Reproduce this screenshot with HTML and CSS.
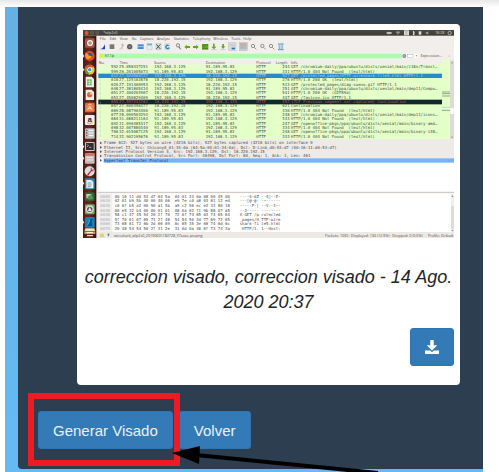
FILE: index.html
```html
<!DOCTYPE html>
<html lang="es">
<head>
<meta charset="utf-8">
<meta name="viewport" content="width=device-width, initial-scale=1">
<title>Generar Visado</title>
<link rel="stylesheet" href="styles.css">
</head>
<body>
<div class="topbar"></div>
<main class="page">
  <section class="panel">
    <figure class="card">
      <svg class="capture" viewBox="0 0 1113 625" role="img" aria-label="Captura de Wireshark">
        <defs>
          <linearGradient id="dock" x1="0" x2="1" y1="0" y2="0"><stop offset="0" stop-color="#4e1c14"/><stop offset=".5" stop-color="#672c20"/><stop offset="1" stop-color="#35130e"/></linearGradient>
          <linearGradient id="sky" x1="0" x2="0" y1="0" y2="1"><stop offset="0" stop-color="#4b4a44"/><stop offset="1" stop-color="#3b3a36"/></linearGradient>
        </defs>
        <rect width="1113" height="625" fill="#f1eeeb"/>
        <rect width="1113" height="17" fill="url(#sky)"/>
        <circle cx="11" cy="9" r="6" fill="#e9572d"/>
        <circle cx="27" cy="9" r="5" fill="#55534c" stroke="#77756b"/><circle cx="43" cy="9" r="5" fill="#55534c" stroke="#77756b"/>
        <text class="ui light" x="61" y="13">*wlp2s0</text>
        <g fill="#dfdbd2">
          <path d="M911 7h6v-3l4 5-4 5v-3h-6zM926 7h-6v4h6z"/><path d="M938 6q7-5 14 0l-7 8z" opacity=".5"/>
          <rect x="963" y="1" width="15" height="15"/><path d="M990 3h2l4 4-3 2 3 3-4 4h-2z"/><rect x="1007" y="4" width="8" height="10"/>
          <path d="M1028 7h4l4-3v10l-4-3h-4z" opacity=".6"/><circle cx="1100" cy="9" r="5" fill="none" stroke="#dfdbd2" stroke-width="2"/>
        </g>
        <path d="M967 5h7M967 9h5M967 12h7" stroke="#555" stroke-width="1"/>
        <text class="ui light" x="1056" y="13">18:28</text>

        <g class="ui">
          <text x="51" y="31">File</text><text x="80" y="31">Edit</text><text x="110" y="31">View</text><text x="146" y="31">Go</text><text x="171" y="31">Capture</text><text x="222" y="31">Analyze</text><text x="272" y="31">Statistics</text><text x="329" y="31">Telephony</text><text x="391" y="31">Wireless</text><text x="445" y="31">Tools</text><text x="481" y="31">Help</text>
        </g>
        <path d="M51 58q9-2 15-15v15z" fill="#193fc4"/>
        <rect x="80" y="43" width="14" height="14" fill="#777"/>
        <path d="M106 58q7-2 13-14v14z" fill="#ccc"/><path d="M114 45l6-3v9" fill="none" stroke="#999" stroke-width="2"/>
        <circle cx="140" cy="50" r="8" fill="#606060"/><circle cx="140" cy="50" r="3" fill="#909090"/>
        <rect x="164" y="43" width="18" height="14" fill="#4288db"/><path d="M164 50h18" stroke="#dceafa" stroke-width="2"/>
        <path d="M192 41h15v18h-15z" fill="#e5eef0" stroke="#a8b6b8"/><path d="M192 41h15v5h-15z" fill="#62b3df"/>
        <path d="M219 41h15v18h-15z" fill="#dfe6e6" stroke="#999"/><path d="M220 43l12 14M232 43l-12 14" stroke="#38505c" stroke-width="3"/>
        <path d="M246 41h14v18h-14z" fill="#e7edf0" stroke="#aaa"/><path d="M257 47a5 5 0 1 0 1 6" fill="none" stroke="#287bb5" stroke-width="4"/>
        <g fill="none" stroke="#555" stroke-width="2"><circle cx="285" cy="46" r="5"/><path d="M288 51l5 7" stroke-width="3"/></g>
        <g fill="#5dac17"><path d="M304 51l8-7v4h9v6h-9v4zM347 51l-8-7v4h-9v6h9v4z"/><path d="M390 41h5v9h5l-7 8-8-8h5zM418 42h5v7h4l-7 8-6-8h4z"/><path d="M357 42h19v17h-19z"/></g>
        <path d="M358 45h17M358 50h6M358 56h17" stroke="#333" stroke-width="1"/><path d="M384 59h17M412 59h15" stroke="#888"/>
        <rect x="437" y="38" width="22" height="24" fill="#d7dbdd" stroke="#aeb2b5"/><path d="M440 43h16M440 47h16" stroke="#aaa"/><path d="M446 53h10v5h-10z" fill="#386dac"/>
        <rect x="469" y="38" width="24" height="24" fill="#ccc" stroke="#aaa"/><path d="M471 42h20" stroke="#d76868" stroke-width="2"/><path d="M471 48h20" stroke="#71a974" stroke-width="2"/><path d="M471 54h20" stroke="#7399bd" stroke-width="2"/>
        <g fill="#eee" stroke="#666" stroke-width="2"><circle cx="510" cy="48" r="5"/><path d="M514 52l6 6"/><circle cx="538" cy="48" r="5"/><path d="M542 52l6 6"/><circle cx="564" cy="48" r="5"/><path d="M568 52l6 6"/></g>
        <path d="M585 41h17v19h-17z" fill="#dbe7f4"/><path d="M585 42h17M585 59h17M587 48h5M595 48h5M587 54h5M595 54h5" stroke="#2d6199" stroke-width="2"/>

        <rect x="49" y="71" width="908" height="14" fill="#adffad"/>
        <path d="M52 72h7v12l-3-3-4 3z" fill="#ffe400"/>
        <text class="mono" x="65" y="82">http</text>
        <rect x="957" y="71" width="50" height="14" fill="#fafafa"/><circle cx="964" cy="78" r="6" fill="#888"/><path d="M961 75l6 6M967 75l-6 6" stroke="#eee"/><rect x="974" y="73" width="16" height="10" fill="#fff" stroke="#888"/><path d="M998 76l5 0-3 4z" fill="#777"/>
        <text class="ui" x="1013" y="82">Expression…</text><text class="ui" x="1095" y="82">+</text>

        <g class="ui"><text x="47" y="102">No.</text><text x="110" y="102">Time</text><text x="213" y="102">Source</text><text x="368" y="102">Destination</text><text x="520" y="102">Protocol</text><text x="578" y="102">Length</text><text x="623" y="102">Info</text></g>
        <rect x="46" y="104" width="1031" height="224" fill="#e4ffc7"/>
        <rect x="46" y="131" width="1031" height="13" fill="#288ac9"/>
        <rect x="46" y="209" width="1031" height="14" fill="#12272e"/>
        <g class="mono">
          <text y="115"><tspan x="84">592</tspan><tspan x="108">25.058437251</tspan><tspan x="214">192.168.3.129</tspan><tspan x="368">91.189.95.83</tspan><tspan x="520">HTTP</tspan><tspan x="598">244</tspan><tspan x="624">GET /chromium-daily/ppa/ubuntu/dists/xenial/main/i18n/Transl…</tspan></text>
          <text y="128"><tspan x="84">599</tspan><tspan x="108">26.201005073</tspan><tspan x="214">91.189.95.83</tspan><tspan x="368">192.168.3.129</tspan><tspan x="520">HTTP</tspan><tspan x="598">331</tspan><tspan x="624">HTTP/1.0 404 Not Found  (text/html)</tspan></text>
          <text y="141" class="selected"><tspan x="84">612</tspan><tspan x="108">27.020500727</tspan><tspan x="214">192.168.3.129</tspan><tspan x="368">18.220.192.15</tspan><tspan x="520">HTTP</tspan><tspan x="598">527</tspan><tspan x="624">GET /protected_pages/HTTP-wireshark-file5.html HTTP/1.1</tspan></text>
          <text y="154"><tspan x="84">618</tspan><tspan x="108">27.125102878</tspan><tspan x="214">18.220.192.15</tspan><tspan x="368">192.168.3.129</tspan><tspan x="520">HTTP</tspan><tspan x="598">276</tspan><tspan x="624">HTTP/1.0 200 OK  (text/html)</tspan></text>
          <text y="167"><tspan x="84">620</tspan><tspan x="108">27.191400953</tspan><tspan x="214">192.168.3.129</tspan><tspan x="368">18.220.192.15</tspan><tspan x="520">HTTP</tspan><tspan x="598">513</tspan><tspan x="624">GET /protected_pages/diag-sueno.gif HTTP/1.1</tspan></text>
          <text y="180"><tspan x="84">648</tspan><tspan x="108">27.381805434</tspan><tspan x="214">192.168.3.129</tspan><tspan x="368">91.189.95.83</tspan><tspan x="520">HTTP</tspan><tspan x="598">251</tspan><tspan x="624">GET /chromium-daily/ppa/ubuntu/dists/xenial/main/dep11/Compo…</tspan></text>
          <text y="193"><tspan x="84">651</tspan><tspan x="108">27.400203967</tspan><tspan x="214">18.220.192.15</tspan><tspan x="368">192.168.3.129</tspan><tspan x="520">HTTP</tspan><tspan x="598">541</tspan><tspan x="624">HTTP/1.0 200 OK  (GIF89a)</tspan></text>
          <text y="206"><tspan x="84">653</tspan><tspan x="108">27.450829409</tspan><tspan x="214">192.168.3.129</tspan><tspan x="368">18.220.192.15</tspan><tspan x="520">HTTP</tspan><tspan x="598">447</tspan><tspan x="624">GET /favicon.ico HTTP/1.1</tspan></text>
          <text y="219" class="warning"><tspan x="84">655</tspan><tspan x="108">27.597241761</tspan><tspan x="214">18.220.192.15</tspan><tspan x="368">192.168.3.129</tspan><tspan x="520">HTTP</tspan><tspan x="598">257</tspan><tspan x="624">[TCP Previous segment not captured] Continuation</tspan></text>
          <text y="232"><tspan x="84">657</tspan><tspan x="108">27.600356377</tspan><tspan x="214">18.220.192.15</tspan><tspan x="368">192.168.3.129</tspan><tspan x="520">HTTP</tspan><tspan x="598">621</tspan><tspan x="624">Continuation</tspan></text>
          <text y="245"><tspan x="84">669</tspan><tspan x="108">28.087904400</tspan><tspan x="214">91.189.95.83</tspan><tspan x="368">192.168.3.129</tspan><tspan x="520">HTTP</tspan><tspan x="598">330</tspan><tspan x="624">HTTP/1.0 404 Not Found  (text/html)</tspan></text>
          <text y="258"><tspan x="84">677</tspan><tspan x="108">28.090503293</tspan><tspan x="214">192.168.3.129</tspan><tspan x="368">91.189.95.83</tspan><tspan x="520">HTTP</tspan><tspan x="598">248</tspan><tspan x="624">GET /chromium-daily/ppa/ubuntu/dists/xenial/main/dep11/icons…</tspan></text>
          <text y="271"><tspan x="84">684</tspan><tspan x="108">31.088211164</tspan><tspan x="214">91.189.95.83</tspan><tspan x="368">192.168.3.129</tspan><tspan x="520">HTTP</tspan><tspan x="598">333</tspan><tspan x="624">HTTP/1.0 404 Not Found  (text/html)</tspan></text>
          <text y="284"><tspan x="84">692</tspan><tspan x="108">31.090485317</tspan><tspan x="214">192.168.3.129</tspan><tspan x="368">91.189.95.83</tspan><tspan x="520">HTTP</tspan><tspan x="598">247</tspan><tspan x="624">GET /openoffice-pkgs/ppa/ubuntu/dists/xenial/main/binary-amd…</tspan></text>
          <text y="297"><tspan x="84">698</tspan><tspan x="108">32.007880340</tspan><tspan x="214">91.189.95.83</tspan><tspan x="368">192.168.3.129</tspan><tspan x="520">HTTP</tspan><tspan x="598">334</tspan><tspan x="624">HTTP/1.0 404 Not Found  (text/html)</tspan></text>
          <text y="310"><tspan x="84">706</tspan><tspan x="108">32.015087125</tspan><tspan x="214">192.168.3.129</tspan><tspan x="368">91.189.95.83</tspan><tspan x="520">HTTP</tspan><tspan x="598">248</tspan><tspan x="624">GET /openoffice-pkgs/ppa/ubuntu/dists/xenial/main/binary-i38…</tspan></text>
          <text y="323"><tspan x="84">714</tspan><tspan x="108">32.902195676</tspan><tspan x="214">91.189.95.83</tspan><tspan x="368">192.168.3.129</tspan><tspan x="520">HTTP</tspan><tspan x="598">333</tspan><tspan x="624">HTTP/1.0 404 Not Found  (text/html)</tspan></text>
        </g>
        <path d="M52 144v180" stroke="#9db38b" stroke-dasharray="9 5"/>
        <rect x="1077" y="91" width="24" height="237" fill="#e4ffc7"/><path d="M1077 186h24M1077 191h24M1077 198h24M1077 241h24" stroke="#66805e" stroke-width="2"/><path d="M1077 232h24" stroke="#b6e9e3" stroke-width="4"/>
        <rect x="1101" y="91" width="12" height="237" fill="#dedbd7"/><rect x="1102" y="234" width="10" height="18" fill="#fff"/><path d="M1104 100l3-4 3 4zM1104 320l3 4 3-4z" fill="#777"/>
        <rect x="46" y="328" width="1067" height="58" fill="#edeae7"/>
        <rect x="46" y="386" width="1067" height="100" fill="#fff"/><rect x="62" y="385" width="1051" height="13" fill="#78b3f5"/>
        <g class="mono">
          <text x="63" y="343">Frame 612: 527 bytes on wire (4216 bits), 527 bytes captured (4216 bits) on interface 0</text>
          <text x="63" y="356">Ethernet II, Src: Chicony0_01:34:0a (64:5a:04:01:34:0a), Dst: D-Link_d0:53:d7 (00:16:11:d0:53:d7)</text>
          <text x="63" y="369">Internet Protocol Version 4, Src: 192.168.3.129, Dst: 18.220.192.15</text>
          <text x="63" y="382">Transmission Control Protocol, Src Port: 46498, Dst Port: 80, Seq: 1, Ack: 1, Len: 461</text>
          <text x="63" y="395" class="navy">Hypertext Transfer Protocol</text>
        </g>
        <path d="M51 335l6 4-6 4zM51 348l6 4-6 4zM51 361l6 4-6 4zM51 374l6 4-6 4zM51 387l6 4-6 4z" fill="#555"/>
        <path d="M46 487h1067" stroke="#c9c4be" stroke-width="3"/>
        <rect x="46" y="490" width="1058" height="116" fill="#fff"/><rect x="46" y="490" width="42" height="116" fill="#f1efed"/>
        <rect x="1104" y="490" width="9" height="116" fill="#f1efed"/><rect x="1104" y="528" width="9" height="68" fill="#dedbd7"/><path d="M1105 500l3-4 4 4zM1105 600l3 4 4-4z" fill="#777"/>
        <g class="mono hex">
          <text y="503"><tspan class="offset" x="52">0000</tspan><tspan x="95">00 16 11 d0 53 d7 64 5a  04 01 34 0a 08 00 45 00</tspan><tspan x="470">····S·dZ ··4j··E·</tspan></text>
          <text y="517"><tspan class="offset" x="52">0010</tspan><tspan x="95">02 01 b9 5b 40 00 40 06  e9 7e c0 a8 03 81 12 ed</tspan><tspan x="470">···[@·@· ·~······</tspan></text>
          <text y="531"><tspan class="offset" x="52">0020</tspan><tspan x="95">c0 0f b5 a2 00 50 a1 5b  a5 c2 56 ec e2 33 80 18</tspan><tspan x="470">·····P·[ ··V··3··</tspan></text>
          <text y="545"><tspan class="offset" x="52">0030</tspan><tspan x="95">00 e5 32 b4 00 00 01 01  08 0a 02 f1 9b 88 07 a5</tspan><tspan x="470">··2····· ········</tspan></text>
          <text y="558"><tspan class="offset" x="52">0040</tspan><tspan x="95">58 c1 47 45 54 20 2f 70  72 6f 74 65 63 74 65 64</tspan><tspan x="470">X·GET /p rotected</tspan></text>
          <text y="572"><tspan class="offset" x="52">0050</tspan><tspan x="95">5f 70 61 67 65 73 2f 48  54 54 50 2d 77 69 72 65</tspan><tspan x="470">_pages/H TTP-wire</tspan></text>
          <text y="586"><tspan class="offset" x="52">0060</tspan><tspan x="95">73 68 61 72 6b 2d 66 69  6c 65 35 2e 68 74 6d 6c</tspan><tspan x="470">shark-fi le5.html</tspan></text>
          <text y="600"><tspan class="offset" x="52">0070</tspan><tspan x="95">20 48 54 54 50 2f 31 2e  31 0d 0a 48 6f 73 74 3a</tspan><tspan x="470"> HTTP/1. 1··Host:</tspan></text>
        </g>
        <rect x="40" y="606" width="1073" height="19" fill="#edeae6"/>
        <circle cx="57" cy="616" r="5" fill="#eadf34" stroke="#b5a920"/><path d="M73 611h7l-4 9z" fill="#4b7b9c"/>
        <g class="ui"><text x="93" y="620">wireshark_wlp2s0_20190601182728_Y7ause.pcapng</text><text x="726" y="620">Packets: 1035 · Displayed: 134 (12.9%) · Dropped: 0 (0.0%)</text><text x="1035" y="620">Profile: Default</text></g>

        <rect y="17" width="40" height="608" fill="url(#dock)"/>
        <g>
          <rect x="6" y="25" width="29" height="28" rx="4" fill="#a35743"/><circle cx="21" cy="39" r="7" fill="none" stroke="#fff" stroke-width="4"/><circle cx="21" cy="39" r="2" fill="#fff"/>
          <circle cx="20" cy="78" r="15" fill="#e84c21"/><circle cx="21" cy="76" r="8" fill="#315a9d"/><path d="M7 68q8 1 11 9l9 2q-5 11-16 7-7-8-4-18" fill="#ff9a22"/>
          <circle cx="20" cy="119" r="15" fill="#efc72a"/><path d="M7 112a15 15 0 0 1 26 0H20l-6 7z" fill="#df4b36"/><path d="M7 112l8 14 5 8A15 15 0 0 1 7 112" fill="#36a252"/><circle cx="20" cy="119" r="7" fill="#fff"/><circle cx="20" cy="119" r="5" fill="#4289e7"/>
          <path d="M8 140h18l7 7v25H8z" fill="#eee"/><path d="M12 148h14v18H12z" fill="#55b54d"/><path d="M12 154h14M12 160h14M19 148v18" stroke="#eee" stroke-width="2"/>
          <path d="M8 179h18l7 7v24H8z" fill="#eee"/><circle cx="20" cy="194" r="8" fill="#d7623c"/><path d="M20 194v-8a8 8 0 0 1 8 8z" fill="#f3bd9b"/>
          <rect x="6" y="218" width="29" height="29" rx="3" fill="#e86732"/><path d="M9 226h23v17H9z" fill="#f1814b"/><path d="M14 239l6-11 7 11M16 236h9M15 226a6 6 0 0 1 11 0" fill="none" stroke="#fff" stroke-width="2"/>
          <rect x="6" y="255" width="29" height="30" rx="3" fill="#eee"/><text class="letter" x="14" y="275">a</text><path d="M12 278q8 6 17 0" fill="none" stroke="#f39a1b" stroke-width="3"/>
          <rect x="6" y="295" width="29" height="31" rx="3" fill="#bebebe"/><path d="M9 301h4M9 309h4M9 317h4" stroke="#666" stroke-width="4"/><path d="M17 301h14M17 309h14M17 317h14" stroke="#fff" stroke-width="3"/>
          <rect x="6" y="336" width="29" height="27" rx="3" fill="#ccc"/><rect x="9" y="339" width="23" height="21" fill="#302d31"/><path d="M12 343l4 4-4 4M18 352h7" fill="none" stroke="#ddd" stroke-width="2"/>
          <rect x="6" y="370" width="29" height="31" rx="3" fill="#c6bcb5"/><path d="M6 371h29v6H6z" fill="#d96b58"/><path d="M10 382h20M10 390h20" stroke="#eee" stroke-width="3"/>
          <circle cx="20" cy="424" r="15" fill="#ddd"/><path d="M12 434l12-14a6 6 0 0 1 1-8l2 7 6-1a7 7 0 0 1-8 6l-9 13z" fill="#c6283c"/>
          <rect x="6" y="445" width="29" height="33" rx="3" fill="#2b83b7"/><path d="M10 450h15l6 6v19H10z" fill="#eee"/><path d="M14 459h11M14 465h12M14 470h9" stroke="#2777a7" stroke-width="2"/>
          <rect x="6" y="487" width="29" height="26" rx="4" fill="#3a5a42"/><path d="M10 492h16v13H10z" fill="#c3d5ae"/><path d="M13 500l13-8 5 15-14 2z" fill="#4c9f48"/>
          <rect x="6" y="523" width="29" height="30" rx="3" fill="#72a462"/><circle cx="20" cy="538" r="12" fill="#ddd"/><circle cx="20" cy="538" r="8" fill="#555"/><path d="M15 543l5-12 6 12z" fill="#eee"/>
          <rect x="6" y="561" width="29" height="32" rx="3" fill="#1681bf"/><path d="M9 588q8-2 13-22l8 1q-7 6-2 21z" fill="#0d4c82"/><path d="M10 589q7-4 11-21" fill="none" stroke="#62c0e8" stroke-width="2"/>
          <path d="M7 595h27l3 9H4z" fill="#e5cf87"/><path d="M4 605h33v7H4z" fill="#d29a45"/><path d="M9 600h23M10 608h20M12 617h18" stroke="#fff" stroke-width="3"/>
        </g>
        <path d="M0 73l4 5-4 5zM0 114l4 5-4 5zM0 345l4 5-4 5zM0 380l4 5-4 5zM0 455l4 5-4 5zM0 572l4 5-4 5z" fill="#eee"/>
      </svg>
      <figcaption class="caption">correccion visado, correccion visado - 14 Ago. 2020 20:37</figcaption>
      <div class="card-actions">
        <button class="btn btn-icon" type="button" aria-label="Descargar">
          <svg class="download" viewBox="0 0 16 16" aria-hidden="true"><path d="M6 0h4v6h4l-6 6-6-6h4zM0 12h6l2 2 2-2h6v4H0z" fill="#fff"/></svg>
        </button>
      </div>
    </figure>
    <div class="actions">
      <div class="highlight"><button class="btn" type="button">Generar Visado</button></div>
      <button class="btn" type="button">Volver</button>
      <svg class="arrow" viewBox="0 0 206 26" aria-hidden="true"><path d="M24 9L206 27" stroke="#000" stroke-width="4"/><path d="M0 7L28 0L27 18z"/></svg>
    </div>
  </section>
</main>
</body>
</html>
```
FILE: styles.css
```css
* { box-sizing: border-box; }

body {
  margin: 0;
  min-height: 100vh;
  display: flex;
  flex-direction: column;
  background: #fff;
  font-family: "Liberation Sans", Arial, sans-serif;
  overflow-x: hidden;
}

.topbar {
  height: 7px;
  background: linear-gradient(#e7e7e7, #fff);
}

.page {
  flex: 1;
  margin: 0 16px 0 5px;
  padding: 0 0 2px 13px;
  background: linear-gradient(#66b0e3, #63bbf2);
  overflow: hidden;
}

.panel {
  padding: 17px 23px 20px 20px;
  background: #2d3e50;
  border-bottom-left-radius: 4px;
}

.card {
  margin: 0 0 26px 39px;
  padding: 6px 6px 19px;
  background: #fff;
  border-radius: 4px;
}

.capture {
  display: block;
  width: 100%;
  height: auto;
}

.ui, .mono { fill: #4a4a4a; }
.ui { font: 11px "Open Sans", sans-serif; }
.mono { font: 12px "DejaVu Sans Mono", monospace; white-space: pre; }
.mono text, .mono tspan { white-space: pre; }
.light { fill: #dfdbd2; }
.selected { fill: #a5d0ec; }
.warning { fill: #b85a5c; }
.navy { fill: #153c76; }
.offset { fill: #aaa; }
.letter { font: bold 22px "Liberation Sans", sans-serif; fill: #222; }

.caption {
  margin-top: 27px;
  color: #212529;
  font-size: 18px;
  font-style: italic;
  line-height: 25px;
  text-align: center;
}

.card-actions {
  display: flex;
  justify-content: flex-end;
  margin-top: 13px;
}

.btn {
  height: 38px;
  padding: 0 14px;
  border: 1px solid #2e75b3;
  border-radius: 3px;
  background: #337ab7;
  color: #e9f1f7;
  font: 15px "Liberation Sans", Arial, sans-serif;
  white-space: nowrap;
}

.btn-icon { width: 44px; }

.download {
  display: block;
  width: 14px;
  height: 14px;
  margin: auto;
}

.actions {
  position: relative;
  display: flex;
  gap: 6px;
}

.highlight { position: relative; }

.highlight::after {
  content: "";
  position: absolute;
  z-index: 1;
  inset: -18px -7px -17px -10px;
  border: 6px solid #ed1c24;
  pointer-events: none;
}

.arrow {
  position: absolute;
  z-index: 2;
  top: 35px;
  left: 134px;
  width: 206px;
  height: 26px;
  overflow: visible;
  pointer-events: none;
}
```
